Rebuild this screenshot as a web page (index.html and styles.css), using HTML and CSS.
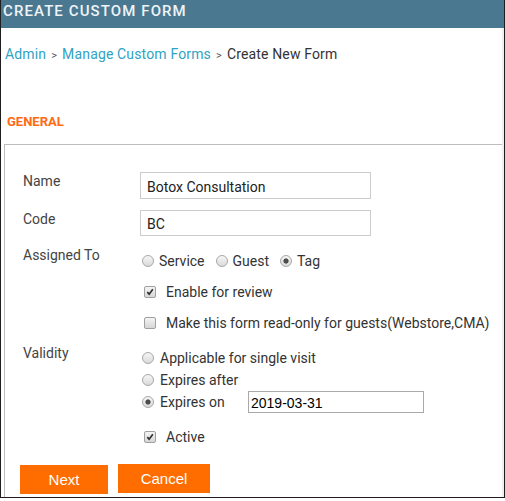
FILE: index.html
```html
<!DOCTYPE html>
<html>
<head>
<meta charset="utf-8">
<link rel="stylesheet" href="styles.css">
</head>
<body>
<div class="frame">
  <div class="header">CREATE CUSTOM FORM</div>
  <div class="main">
    <div class="crumbs"><a class="link">Admin</a><span class="sep">&gt;</span><a class="link">Manage Custom Forms</a><span class="sep">&gt;</span><span class="current">Create New Form</span></div>
    <div class="section-title">GENERAL</div>
    <div class="fieldset">
      <div class="row row-name">
        <div class="label">Name</div>
        <div class="field"><input class="text" type="text" value="Botox Consultation"></div>
      </div>
      <div class="row row-code">
        <div class="label">Code</div>
        <div class="field"><input class="text" type="text" value="BC"></div>
      </div>
      <div class="row row-assigned">
        <div class="label">Assigned To</div>
        <div class="field options-inline">
          <label class="opt"><input class="radio" type="radio" name="assign"><span>Service</span></label>
          <label class="opt"><input class="radio" type="radio" name="assign"><span>Guest</span></label>
          <label class="opt"><input class="radio" type="radio" name="assign" checked><span>Tag</span></label>
        </div>
      </div>
      <div class="row row-check row-review">
        <div class="label"></div>
        <div class="field"><span class="cb"><svg width="12" height="12" viewBox="0 0 12 12"><path d="M2.8 6.2 L5 8.6 L9.4 2.8" fill="none" stroke="#2f2f2f" stroke-width="2"/></svg></span><span>Enable for review</span></div>
      </div>
      <div class="row row-check row-readonly">
        <div class="label"></div>
        <div class="field"><span class="cb"></span><span>Make this form read-only for guests(Webstore,CMA)</span></div>
      </div>
      <div class="row row-validity">
        <div class="label">Validity</div>
        <div class="field options-stack">
          <label class="vopt"><input class="radio" type="radio" name="valid"><span>Applicable for single visit</span></label>
          <label class="vopt"><input class="radio" type="radio" name="valid"><span>Expires after</span></label>
          <label class="vopt"><input class="radio" type="radio" name="valid" checked><span class="vlabel">Expires on</span><input class="date" type="text" value="2019-03-31"></label>
        </div>
      </div>
      <div class="row row-check row-active">
        <div class="label"></div>
        <div class="field"><span class="cb"><svg width="12" height="12" viewBox="0 0 12 12"><path d="M2.8 6.2 L5 8.6 L9.4 2.8" fill="none" stroke="#2f2f2f" stroke-width="2"/></svg></span><span>Active</span></div>
      </div>
      <div class="buttons">
        <button class="btn btn-next">Next</button>
        <button class="btn btn-cancel">Cancel</button>
      </div>
    </div>
  </div>
</div>
</body>
</html>
```

FILE: styles.css
```css
html, body {
  margin: 0;
  padding: 0;
  background: #ffffff;
}
body {
  font-family: Roboto, "Liberation Sans", Arial, sans-serif;
  font-size: 14px;
  color: #333;
}
.frame {
  width: 505px;
  height: 498px;
  box-sizing: border-box;
  border-left: 1px solid #1e1e1e;
  border-right: 1px solid #1e1e1e;
  border-bottom: 1px solid #1e1e1e;
  overflow: hidden;
  display: flex;
  flex-direction: column;
}
.header {
  height: 28px;
  flex: none;
  background: #4a7891;
  color: #eef3f6;
  font-family: Roboto, sans-serif;
  font-weight: 500;
  font-size: 15px;
  letter-spacing: 1.1px;
  line-height: 22px;
  padding-left: 2px;
  white-space: nowrap;
}
.main {
  flex: 1;
  border-right: 2px solid #efefef;
  display: flex;
  flex-direction: column;
}
.crumbs {
  margin-top: 16px;
  padding-left: 4px;
  line-height: 20px;
  font-size: 14px;
  letter-spacing: 0.15px;
  white-space: nowrap;
}
.link {
  color: #2fa3c3;
}
.sep {
  color: #555;
  font-size: 11px;
  margin: 0 5px;
}
.current {
  color: #333;
}
.section-title {
  margin-top: 48px;
  padding-left: 6px;
  color: #ff6a13;
  font-weight: 700;
  font-size: 13px;
  line-height: 16px;
}
.fieldset {
  margin-top: 14px;
  margin-left: 3px;
  flex: 1;
  border-top: 1px solid #bdbdbd;
  border-left: 1px solid #bdbdbd;
  padding: 27px 0 0 18px;
}
.row {
  display: grid;
  grid-template-columns: 117px 1fr;
  align-items: start;
}
.label {
  color: #444;
  line-height: 18px;
}
.text {
  box-sizing: border-box;
  width: 231px;
  height: 27px;
  border: 1px solid #cccccc;
  padding: 2px 6px 0;
  font-family: Roboto, sans-serif;
  font-size: 14px;
  color: #222;
  outline: none;
  margin: 0;
}
.row-code {
  margin-top: 11px;
}
.row-code .text {
  height: 26px;
}
.row-assigned {
  margin-top: 10px;
}
.options-inline {
  padding-top: 6px;
  line-height: 18px;
  display: flex;
  align-items: center;
  color: #333;
}
.opt {
  display: flex;
  align-items: center;
  margin-right: 9px;
}
.radio {
  appearance: none;
  -webkit-appearance: none;
  width: 12px;
  height: 12px;
  margin: 0 5px 0 2px;
  border-radius: 50%;
  border: 1px solid #a8a8a8;
  background: linear-gradient(#f6f6f6, #dadada);
  box-sizing: border-box;
  flex: none;
}
.radio:checked {
  background: radial-gradient(circle, #4d4d4d 0 2.2px, rgba(77,77,77,0) 3px), linear-gradient(#f6f6f6, #dadada);
}
.row-check .field {
  display: flex;
  align-items: center;
  line-height: 18px;
  color: #333;
}
.cb {
  width: 12px;
  height: 12px;
  box-sizing: border-box;
  border: 1px solid #a0a0a0;
  border-radius: 2px;
  background: linear-gradient(#f4f4f4, #d6d6d6);
  margin: 0 10px 0 4px;
  display: flex;
  align-items: center;
  justify-content: center;
  flex: none;
}
.cb svg {
  display: block;
}
.row-review {
  margin-top: 13px;
}
.row-readonly {
  margin-top: 13px;
}
.row-validity {
  margin-top: 12px;
}
.options-stack {
  padding-top: 3px;
  display: flex;
  flex-direction: column;
}
.vopt {
  display: flex;
  align-items: center;
  height: 22px;
  line-height: 22px;
}
.vopt .radio {
  margin-right: 6px;
}
.vlabel {
  width: 88px;
}
.date {
  box-sizing: border-box;
  width: 176px;
  height: 22px;
  border: 1px solid #a9a9a9;
  padding: 1px 2px 0;
  font-family: "Liberation Sans", Arial, sans-serif;
  font-size: 14px;
  color: #000;
  margin: 0;
  outline: none;
}
.row-active {
  margin-top: 15px;
}
.buttons {
  margin-top: 18px;
  margin-left: -3px;
  display: flex;
  gap: 10px;
  align-items: flex-start;
}
.btn {
  border: none;
  background: #ff6d00;
  color: #ffffff;
  font-family: "Liberation Sans", Arial, sans-serif;
  font-size: 15px;
  height: 29px;
  padding: 0;
  margin: 0;
}
.btn-next {
  width: 88px;
  margin-top: 1px;
}
.btn-cancel {
  width: 92px;
}
```
